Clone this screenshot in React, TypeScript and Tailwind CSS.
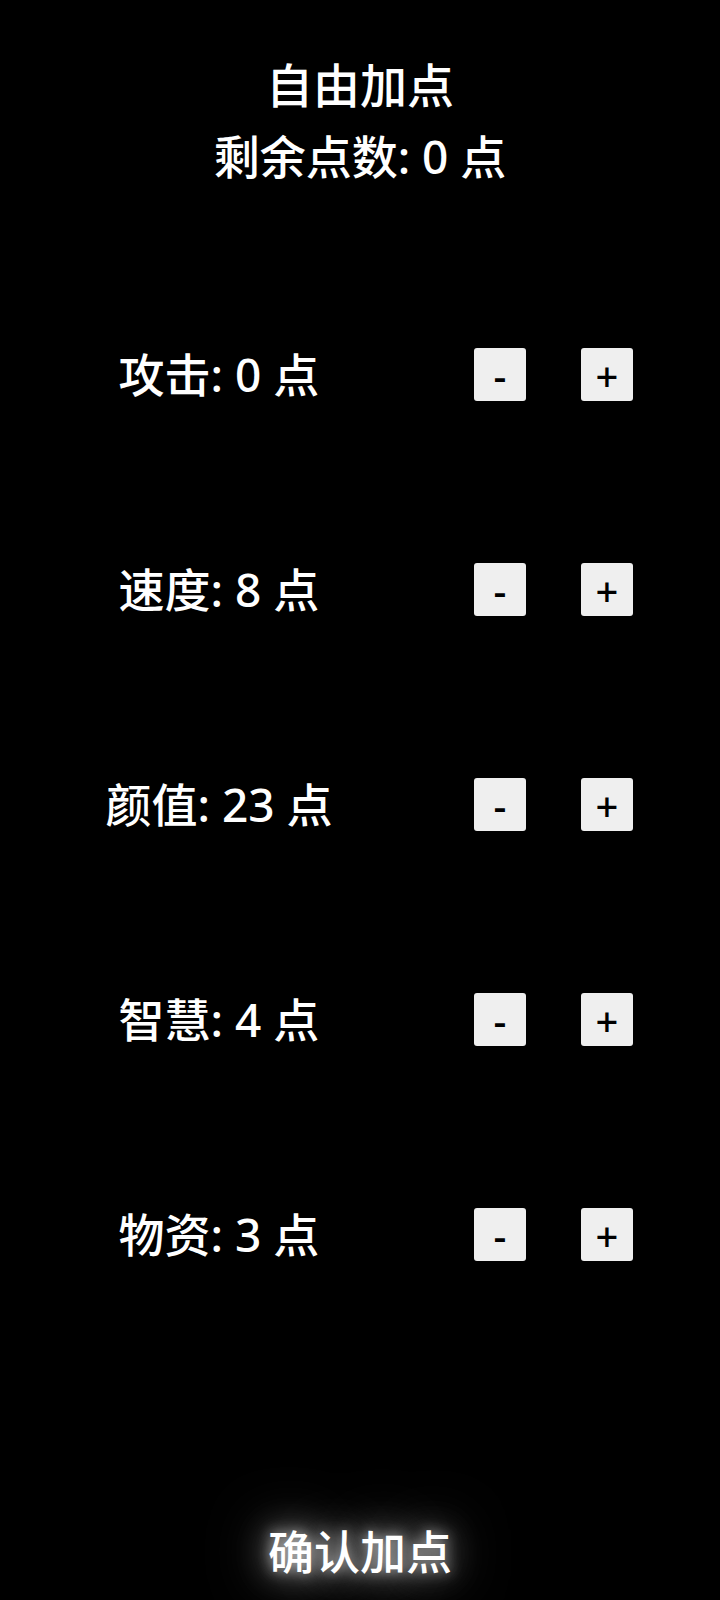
const stats = [
  { name: '攻击', value: 0 },
  { name: '速度', value: 8 },
  { name: '颜值', value: 23 },
  { name: '智慧', value: 4 },
  { name: '物资', value: 3 },
];

const font = 'font-["Noto_Sans","Noto_Sans_CJK_SC",sans-serif]';

function StepButton({ label }: { label: string }) {
  return (
    <button
      type="button"
      className="flex h-[53px] w-[52px] items-center justify-center rounded-[3px] bg-[#efefef] pt-[2px] text-[40px] leading-none font-medium text-black"
    >
      {label}
    </button>
  );
}

export default function App() {
  return (
    <div className={`flex h-[1600px] w-[720px] flex-col bg-black font-medium text-white ${font}`}>
      <div className="pt-[50px] text-center">
        <div className="text-[47px] leading-[71px]">自由加点</div>
        <div className="text-[46px] leading-[71px]">剩余点数: 0 点</div>
      </div>

      <div className="mt-[75px] flex flex-col">
        {stats.map(stat => (
          <div key={stat.name} className="flex h-[215px] items-center">
            <div className="w-[438px] text-center text-[46px]">
              {stat.name}: {stat.value} 点
            </div>
            <div className="ml-[36px] flex gap-[55px]">
              <StepButton label="-" />
              <StepButton label="+" />
            </div>
          </div>
        ))}
      </div>

      <div className="mt-auto pb-[14px] text-center">
        <span className="text-[46px] leading-[70px] [text-shadow:0_0_14px_rgba(255,255,255,0.7),0_0_36px_rgba(255,255,255,0.6),0_0_60px_rgba(255,255,255,0.5)]">
          确认加点
        </span>
      </div>
    </div>
  );
}
